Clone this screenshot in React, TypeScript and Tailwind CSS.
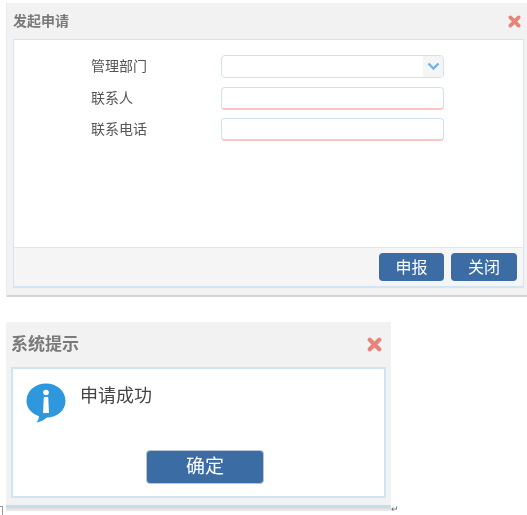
const font = { fontFamily: '"Liberation Sans", "Noto Sans CJK SC", sans-serif' };

function CloseIcon({ className }: { className: string }) {
  return (
    <svg className={className} viewBox="0 0 12 12" fill="none">
      <path d="M2.2 2.2 9.8 9.8M9.8 2.2 2.2 9.8" stroke="#e8837b" strokeWidth="3.4" strokeLinecap="round" />
    </svg>
  );
}

function FormRow({ label, select }: { label: string; select?: boolean }) {
  return (
    <div className="flex items-center h-[23px]">
      <label className="w-[207px] pl-[77px] pb-[2px] shrink-0 text-[14px] leading-none text-[#555] whitespace-nowrap">{label}</label>
      {select ? (
        <div className="w-[223px] h-[23px] flex justify-end bg-white border border-[#cfe2f1] rounded-[4px] overflow-hidden">
          <div className="w-[20px] bg-[#f5f5f5] flex items-center justify-center">
            <svg className="w-[13px] h-[9px]" viewBox="0 0 13 9" fill="none">
              <path d="M1.500 1.500 6.500 6.500 11.500 1.500" stroke="#6fb3e8" strokeWidth="2.400" />
            </svg>
          </div>
        </div>
      ) : (
        <div className="w-[223px] h-[23px] bg-white border border-[#cfe2f1] border-b-2 border-b-[#fbc4c4] rounded-[4px]" />
      )}
    </div>
  );
}

function ApplyDialog() {
  return (
    <div className="ml-[6px] w-[521px] bg-[#f2f2f2] border-l border-[#e3ecf3]">
      <div className="h-[36px] flex items-center justify-between pl-[6px] pr-[6px]">
        <span className="text-[14px] font-bold text-[#7a7a7a]">发起申请</span>
        <CloseIcon className="w-[13px] h-[13px]" />
      </div>
      <div className="ml-[6px] mr-[3px] border border-[#d3e5f2] border-b-2">
        <div className="h-[207px] bg-white pt-[15px] flex flex-col">
          <FormRow label="管理部门" select />
          <div className="h-[9px]" />
          <FormRow label="联系人" />
          <div className="h-[8px]" />
          <FormRow label="联系电话" />
        </div>
        <div className="h-[39px] bg-[#f5f5f5] border-t border-[#e6e6e6] flex items-center justify-end gap-[7px] pr-[6px]">
          <button className="w-[65px] h-[28px] pt-[1px] bg-[#3c6ca4] rounded-[4px] text-white text-[16px]">申报</button>
          <button className="w-[66px] h-[28px] pt-[1px] bg-[#3c6ca4] rounded-[4px] text-white text-[16px]">关闭</button>
        </div>
      </div>
      <div className="h-[7px]" />
      <div className="h-[2px] bg-[#d4d4d4]" />
    </div>
  );
}

function InfoIcon() {
  return (
    <svg className="w-[40px] h-[40px] shrink-0" viewBox="0 0 40 40">
      <path d="M20 .5C31 .5 39.500 8 39.500 18 39.500 27.500 31 34.500 21 34.500 18 37 14.500 38.800 10.500 39.500 12 37.500 13 35.500 13 33.200 5.500 30.500.5 25 .5 18 .5 8 9 .5 20 .5Z" fill="#2f97dd" />
      <circle cx="20" cy="9.500" r="2.800" fill="#fff" />
      <path d="M17.800 14H22.200L23 30H17Z" fill="#fff" />
    </svg>
  );
}

function SuccessDialog() {
  return (
    <div className="ml-[6px] mt-[25px] w-[385px] bg-[#f2f2f2]">
      <div className="h-[45px] flex items-center justify-between pl-[5px] pr-[9px]">
        <span className="text-[17px] font-bold text-[#7a7a7a]">系统提示</span>
        <CloseIcon className="w-[15px] h-[15px]" />
      </div>
      <div className="ml-[5px] mr-[5px] h-[131px] bg-white border-2 border-[#cfe4f2] pt-[14px] flex flex-col">
        <div className="flex pl-[13px] gap-[14px]">
          <InfoIcon />
          <span className="text-[18px] leading-[26px] text-[#444]">申请成功</span>
        </div>
        <div className="flex justify-start mt-[27px] pl-[133px]">
          <button className="w-[118px] h-[34px] pt-[1px] bg-[#3c6ca4] rounded-[4px] border border-[#b9c6d6] text-white text-[19px]">确定</button>
        </div>
      </div>
      <div className="h-[7px]" />
      <div className="h-[2px] bg-[#c3deee]" />
      <div className="h-[4px] bg-gradient-to-b from-[#d5d5d5] to-[#eeeeee]" />
    </div>
  );
}

export default function App() {
  return (
    <div className="relative w-[527px] h-[515px] overflow-hidden bg-white pt-[3px] blur-[0.4px]" style={font}>
      <ApplyDialog />
      <SuccessDialog />
      <div className="absolute left-0 top-[506px] w-[3px] h-[9px] border-t border-r border-[#999]" />
      <span className="absolute left-[391px] top-[503px] text-[9px] leading-[12px] text-[#666]">↵</span>
    </div>
  );
}
